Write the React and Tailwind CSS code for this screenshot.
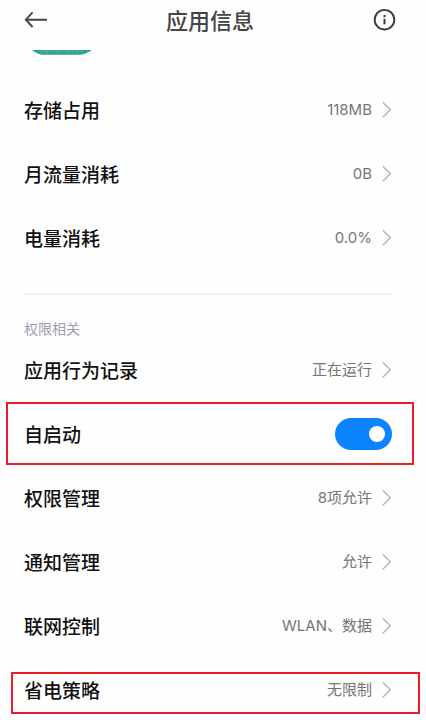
import { useState } from "react";

const usage = [
  { label: "存储占用", value: "118MB" },
  { label: "月流量消耗", value: "0B" },
  { label: "电量消耗", value: "0.0%" },
];

const permissions = [
  { label: "权限管理", value: "8项允许" },
  { label: "通知管理", value: "允许" },
  { label: "联网控制", value: "WLAN、数据" },
];

function Chevron() {
  return (
    <svg viewBox="0 0 10 18" className="w-[10px] h-[18px]" fill="none" stroke="#b4b4b4" strokeWidth="1.4" aria-hidden="true">
      <path d="M0.800 1.300 8.400 8.800 0.800 16.300" />
    </svg>
  );
}

// red frame drawn over a row that needs attention
function Highlight({ className }) {
  return <span className={`absolute border-2 border-[#ed1c24] pointer-events-none ${className}`} />;
}

function Row({ label, value, children }) {
  return (
    <li className="relative">
      <button type="button" className="w-full h-10 flex items-center justify-between text-left">
        <span className="text-[19px] leading-6 font-medium text-[#111]">{label}</span>
        <span className="flex items-center gap-[10px] text-[15px] leading-6 text-[#757575] font-[Inter,'Noto_Sans_CJK_SC',sans-serif]">
          {value}
          <Chevron />
        </span>
      </button>
      {children}
    </li>
  );
}

function ToggleRow({ label, children }) {
  const [on, setOn] = useState(true);

  return (
    <li className="relative">
      <label className="h-10 flex items-center justify-between cursor-pointer">
        <span className="text-[19px] leading-6 font-medium text-[#111]">{label}</span>
        <input
          type="checkbox"
          role="switch"
          checked={on}
          onChange={(e) => setOn(e.target.checked)}
          className="appearance-none w-[57px] h-8 px-[7px] rounded-full flex items-center bg-[#e0e0e0] checked:bg-[#0d84ff] checked:justify-end before:w-4 before:h-4 before:rounded-full before:bg-white"
        />
      </label>
      {children}
    </li>
  );
}

export default function App() {
  return (
    <div className="bg-[#fefefe] font-['Noto_Sans_CJK_SC',sans-serif]">
      <header className="h-[50px] pt-[7px] pb-[19px] pl-6 pr-[30px] flex items-center justify-between">
        <button type="button" aria-label="返回" className="w-6 h-6">
          <svg viewBox="0 0 24 24" className="w-6 h-6" fill="none" stroke="#444" strokeWidth="1.9">
            <path d="M23 12.700H2M8.600 5.400 1.800 12.700l6.800 7.300" />
          </svg>
        </button>
        <h1 className="text-[22px] leading-6 font-medium text-[#444]">应用信息</h1>
        <button type="button" aria-label="详情" className="w-6 h-6">
          <svg viewBox="0 0 24 24" className="w-6 h-6" fill="none" stroke="#3c3c3c" strokeWidth="1.9">
            <circle cx="12.500" cy="12.700" r="9.800" />
            <path d="M12.500 11.700V17.200M12.500 8V10.200" strokeWidth="2" />
          </svg>
        </button>
      </header>

      <main className="pl-6 pr-[34px] pb-2">
        {/* bottom edge of the app icon, the rest is scrolled away */}
        <svg viewBox="0 0 60 5" className="ml-2 w-[60px] h-[5px]" aria-hidden="true">
          <path d="M0 0H59.500C57 2.500 52 4.800 46 4.800H13C7 4.800 3 2.500 0 0Z" fill="#30a193" />
          <path d="M8 1.500H52M15.500 0V4M25.500 0V4M35.500 0V4M45.500 0V4" stroke="#62b9ae" strokeWidth="0.5" />
        </svg>

        <ul className="mt-[35px] flex flex-col gap-6">
          {usage.map((item) => (
            <Row key={item.label} label={item.label} value={item.value} />
          ))}
        </ul>

        <hr className="mt-[35px] border-t-2 border-[#f1f1f1]" />

        <h2 className="mt-[23px] text-[14px] leading-5 text-[#9c9cb4]">权限相关</h2>
        <ul className="mt-3 flex flex-col gap-6">
          <Row label="应用行为记录" value="正在运行" />
          <ToggleRow label="自启动">
            <Highlight className="-left-[18px] -right-[22px] -top-3 -bottom-[11px]" />
          </ToggleRow>
          {permissions.map((item) => (
            <Row key={item.label} label={item.label} value={item.value} />
          ))}
          <Row label="省电策略" value="无限制">
            <Highlight className="-left-[13px] -right-7 top-[2px] -bottom-1" />
          </Row>
        </ul>
      </main>
    </div>
  );
}
